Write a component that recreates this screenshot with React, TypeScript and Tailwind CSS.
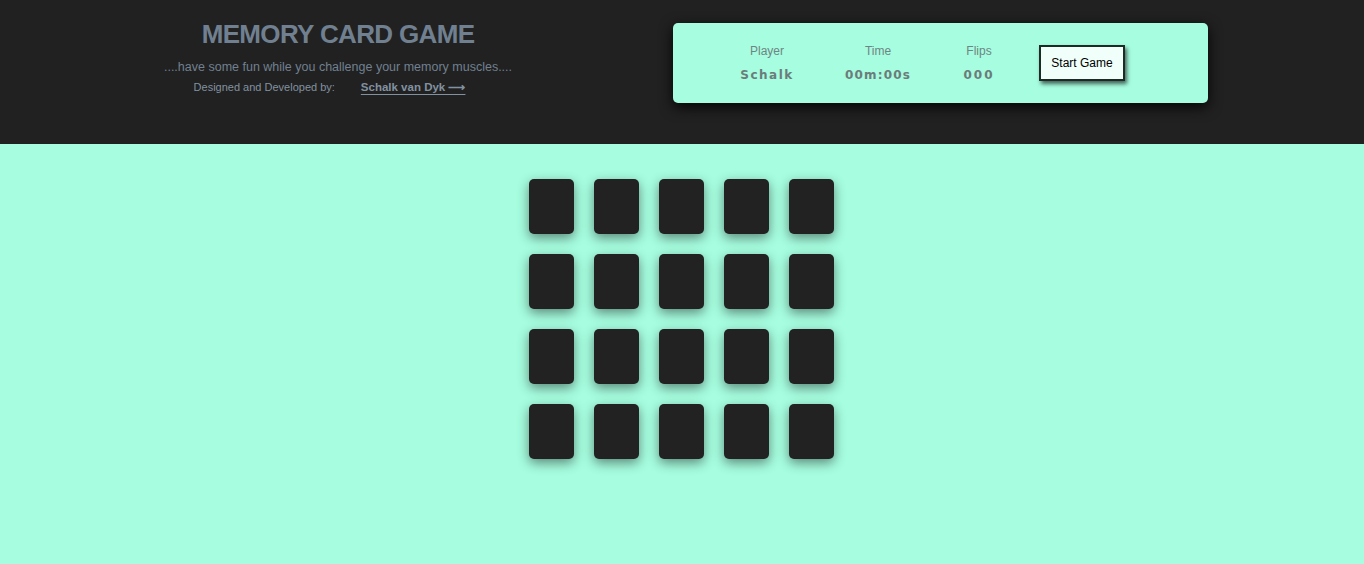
export default function App() {
  const cards = Array.from({ length: 20 }, (_, i) => i);

  return (
    <div className="min-h-[564px] bg-[#a6fddf] font-['Liberation_Sans',Arial,sans-serif]">
      {/* Header */}
      <header className="h-[144px] bg-[#212121] flex">
        <div className="w-[673px] flex flex-col items-center pt-[18px] pl-[3px]">
          <h1 className="text-[26px] leading-[32px] font-bold text-[#708090] tracking-tight">
            MEMORY CARD GAME
          </h1>
          <p className="mt-[9px] text-[12.5px] leading-[16px] text-[#708090]">
            ....have some fun while you challenge your memory muscles....
          </p>
          <div className="mt-[5px] pr-[17px] flex items-center text-[11px] leading-[14px] text-[#8291a0]">
            <span>Designed and Developed by:</span>
            <a href="#" className="ml-[26px] text-[11.5px] font-bold text-[#8291a0] underline underline-offset-[3px]">
              Schalk van Dyk ⟶
            </a>
          </div>
        </div>

        <div className="pt-[23px]">
          <div className="w-[535px] h-[80px] rounded-[5px] bg-[#a6fddf] shadow-[0_4px_14px_rgba(0,0,0,0.9)] flex items-center pl-[66px]">
            <div className="w-[56px] flex flex-col items-center">
              <span className="text-[12px] leading-[14px] text-[#6f8584]">Player</span>
              <span className="mt-[9px] text-[12px] leading-[16px] font-bold tracking-[1.5px] text-[#6b7c7a] font-['DejaVu_Sans',sans-serif]">Schalk</span>
            </div>
            <div className="ml-[45px] w-[76px] flex flex-col items-center">
              <span className="text-[12px] leading-[14px] text-[#6f8584]">Time</span>
              <span className="mt-[9px] text-[12px] leading-[16px] font-bold tracking-[1.2px] text-[#6b7c7a] font-['DejaVu_Sans',sans-serif]">00m:00s</span>
            </div>
            <div className="ml-[38px] w-[50px] flex flex-col items-center">
              <span className="text-[12px] leading-[14px] text-[#6f8584]">Flips</span>
              <span className="mt-[9px] text-[12px] leading-[16px] font-bold tracking-[2px] text-[#6b7c7a] font-['DejaVu_Sans',sans-serif]">000</span>
            </div>
            <button className="ml-[35px] w-[86px] h-[36px] bg-[#f0fff9] border-2 border-[#1d2a26] text-[12px] text-black shadow-[2px_3px_4px_rgba(0,0,0,0.6)]">
              Start Game
            </button>
          </div>
        </div>
      </header>

      {/* Board */}
      <main className="flex justify-center pt-[35px] pr-[1px]">
        <div className="grid grid-cols-5 gap-x-[20px] gap-y-[20px]">
          {cards.map((c) => (
            <div
              key={c}
              className="w-[45px] h-[55px] rounded-[5px] bg-[#222222] shadow-[0_4px_12px_rgba(0,0,0,0.45)]"
            />
          ))}
        </div>
      </main>
    </div>
  );
}
